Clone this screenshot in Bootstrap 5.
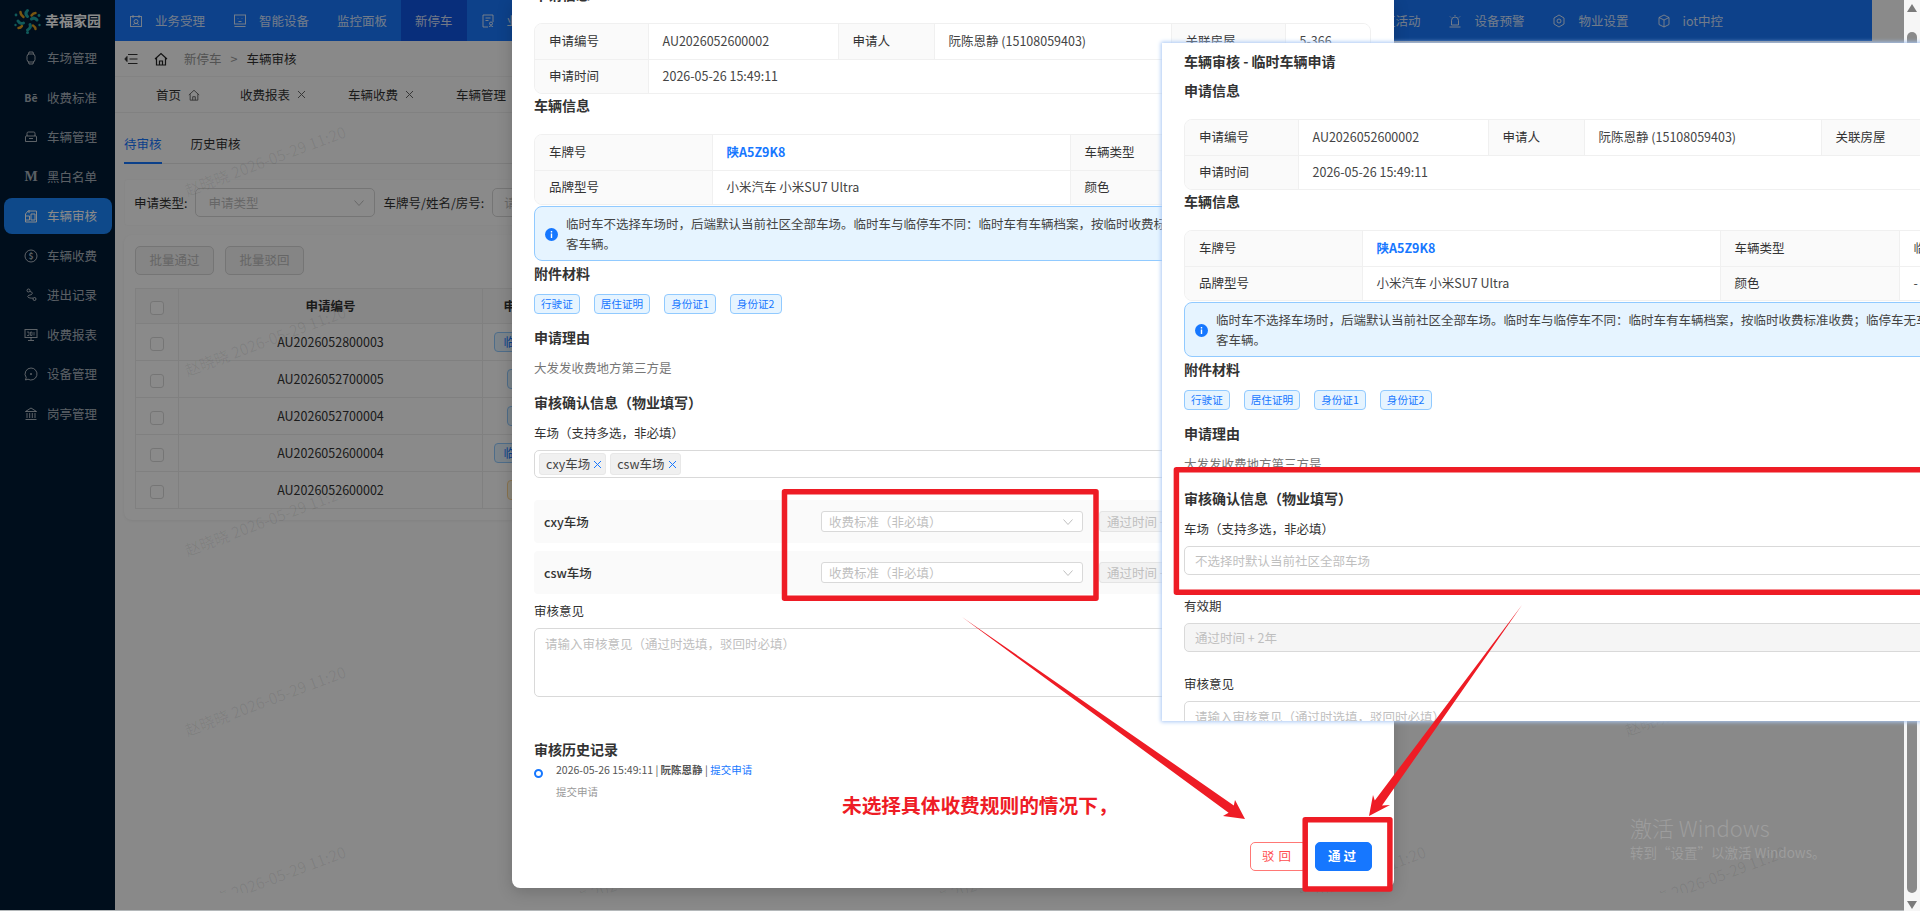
<!DOCTYPE html>
<html lang="zh-CN">
<head>
    <meta charset="UTF-8">
    <meta name="viewport" content="width=device-width, initial-scale=1.0">
    <title>车辆审核</title>
    <link href="https://cdn.jsdelivr.net/npm/bootstrap@5.3.3/dist/css/bootstrap.min.css" rel="stylesheet">
    <style>
        html, body { height: 100%; overflow: hidden; }
        body { font-family: "Noto Sans CJK SC", "Liberation Sans", sans-serif; font-size: 12.5px; line-height: 20px; color: #333; background: #fff; }
        svg { display: block; flex: none; }

        .stage { position: relative; width: 1920px; height: 911px; overflow: hidden; background: #b4b8ba; }
        .page-shell { position: relative; width: 1904px; height: 910px; background: #fdfdfd; }
        .dim-mask { position: absolute; inset: 0; z-index: 5; background: rgba(0, 0, 0, .46); }
        .scroll-rail { width: 16px; height: 911px; background: #f6f6f6; }
        .rail-up { width: 0; height: 0; margin-top: 4px; border: 5px solid transparent; border-top: 0; border-bottom: 8px solid #7a7a7a; }
        .rail-down { width: 0; height: 0; margin: 8px 0 2px; border: 5px solid transparent; border-bottom: 0; border-top: 8px solid #7a7a7a; }
        .rail-thumb { width: 10px; margin-top: 20px; border-radius: 5px; background: #8a8a8a; }

        /* sidebar */
        .side-rail { width: 115px; background: #001a35; position: relative; z-index: 2; }
        .brand-row { height: 40px; padding-left: 14px; gap: 4px; color: #fff; font-size: 14px; font-weight: 700; }
        .side-menu { gap: 3.55px; }
        .side-menu .nav-link { height: 36px; margin: 0 3px 0 4px; padding: 0 0 0 20px; gap: 9px; border-radius: 8px; color: rgba(255, 255, 255, .68); font-size: 12.5px; }
        .side-menu .nav-link.active { background: #1a88ff; color: #fff; }
        .menu-ico { width: 14px; height: 14px; font-size: 10.5px; line-height: 14px; text-align: center; font-weight: 700; }
        .menu-ico-serif { font-family: "Liberation Serif", serif; font-size: 14px; }

        /* header */
        .top-strip { height: 41px; background: #1979ff; }
        .top-menu .nav-link { height: 41px; padding: 0 14px; gap: 12px; color: rgba(255, 255, 255, .82); font-size: 12.5px; }
        .top-menu .nav-link.active { background: #1056e4; }
        .top-gap { width: 135px; }
        .top-user { width: 32px; background: #fff; }
        .crumb-row { height: 36px; padding-left: 9px; border-bottom: 1px solid #f2f2f2; color: #333; }
        .crumb-muted { color: #999; }
        .crumb-sep { margin: 0 9px; color: #999; }
        .tag-row { height: 36px; padding-left: 41px; border-bottom: 1px solid #eee; }
        .tag-item { width: 108px; gap: 7px; color: #333; }
        .tag-home { width: 84px; }

        .content-wrap { padding: 9px 9px 0; }
        .audit-tabs { height: 42px; border-bottom: 1px solid #e8e8e8; gap: 29px; }
        .audit-tabs .nav-link { height: 42px; padding: 12px 0 0; line-height: 20px; color: #333; font-size: 12.5px; }
        .audit-tabs .nav-link.active { color: #1677ff; border-bottom: 2px solid #1677ff; }
        .filter-box { height: 47px; margin-top: 15px; padding-left: 10px; background: #fff; border-radius: 4px; gap: 8px; box-shadow: inset 0 0 0 1px #fafafa; }
        .fake-select { display: flex; align-items: center; justify-content: space-between; border: 1px solid #d9d9d9; border-radius: 5px; background: #fff; color: #bfbfbf; }
        .filter-select { width: 180px; height: 29px; padding: 0 10px 0 12px; }
        .filter-input { width: 180px; height: 29px; padding-left: 11px; }
        .data-box { height: 285px; margin-top: 9px; padding: 11px; background: #fff; border-radius: 8px; box-shadow: 0 1px 3px rgba(0, 0, 0, .06); }
        .btn-mute { width: 79px; height: 29px; padding: 0; margin-right: 11px; font-size: 12.5px; color: #bdbdbd; background: #f5f5f5; border: 1px solid #d9d9d9; border-radius: 5px; }
        .audit-table { width: 800px; margin: 13px 0 0; table-layout: fixed; }
        .audit-table th, .audit-table td { height: 37px; padding: 0; text-align: center; vertical-align: middle; border: 1px solid #ececec; font-size: 12.5px; color: #333; background: transparent; }
        .audit-table th { height: 35px; font-weight: 600; background: #fafafa; }
        .cw-check { width: 43px; }
        .cw-no { width: 304px; }
        .cw-type { width: 92px; }
        .audit-table .form-check-input { width: 14px; height: 14px; margin: 0; float: none; vertical-align: middle; border-color: #d9d9d9; }
        .type-chip { display: inline-block; height: 20px; line-height: 18px; padding: 0 8px; border: 1px solid #91caff; border-radius: 4px; background: #e6f4ff; color: #1677ff; }
        .type-chip-warn { border-color: #ffd591; background: #fff7e6; color: #d46b08; }

        .watermark-layer { position: absolute; left: 85px; top: 70px; height: 823px; width: 1819px; overflow: hidden; z-index: 3; display: grid; grid-template-columns: repeat(5, 360px); grid-auto-rows: 180px; pointer-events: none; }
        .watermark-layer span { display: flex; align-items: center; justify-content: center; transform: rotate(-20.5deg); font-size: 15.4px; white-space: nowrap; color: rgba(0, 0, 0, .075); }

        /* modal and the pasted copy of it */
        .review-modal { position: absolute; left: 512px; top: 0; width: 882px; height: 888px; z-index: 6; padding: 0 22px 17px; background: #fff; border-radius: 0 0 8px 8px; box-shadow: 0 4px 16px rgba(0, 0, 0, .18); }
        .review-copy { position: absolute; left: 1162px; top: 43px; width: 882px; height: 678px; z-index: 7; padding: 8px 22px 0; overflow: hidden; background: #fff; box-shadow: 0 0 4px 1px #a9c8f5; }
        .copy-title { margin-bottom: 9px; font-size: 14px; font-weight: 600; line-height: 20px; }
        .sec-title { font-size: 14px; font-weight: 600; line-height: 20px; margin-bottom: 11px; color: #333; }
        .sec-title-wide { margin-bottom: 19px; }
        .sec-title-tight { margin-bottom: 5px; }
        .sec-top { margin-top: -16px; }
        .mt-1px { margin-top: 1px; }
        .mt-2px { margin-top: 2px; }
        .mt-13 { margin-top: 13px; }
        .mt-14 { margin-top: 14px; }
        .mt-21 { margin-top: 21px; }
        .mt-22 { margin-top: 22px; }
        .mt-42 { margin-top: 42px; }
        .field-label { line-height: 20px; margin-bottom: 7px; color: #333; }
        .mt-7 { margin-top: 7px; }

        .info-wrap { width: 837px; border: 1px solid #f0f0f0; border-radius: 8px; overflow: hidden; }
        .info-grid { width: 835px; margin: 0; table-layout: fixed; }
        .info-grid th, .info-grid td { height: 35px; padding: 0 14px; vertical-align: middle; font-size: 12.5px; font-weight: 400; color: #444; border: solid #f0f0f0; border-width: 0 1px 1px 0; background: #fff; }
        .info-grid tr:last-child th, .info-grid tr:last-child td { height: 34px; border-bottom: 0; }
        .info-grid th { background: #fafafa; color: #333; }
        .plate-link { color: #1677ff; font-weight: 700; }
        .w113 { width: 113px; } .w190 { width: 190px; } .w96 { width: 96px; } .w237 { width: 237px; } .w114 { width: 114px; } .w85 { width: 85px; }
        .w177 { width: 177px; } .w358 { width: 358px; } .w179 { width: 179px; } .w121 { width: 121px; }

        .tip-box { width: 837px; height: 55px; margin: 1px 0 0; padding: 7px 0 0 10px; gap: 8px; background: #e6f4ff; border: 1px solid #91caff; border-radius: 8px; color: #444; white-space: nowrap; overflow: hidden; }
        .tip-ico { width: 13px; height: 13px; margin-top: 14px; }
        .file-list { gap: 14px; height: 20px; }
        .file-chip { height: 20px; padding: 0 6px; line-height: 18px; font-size: 10.6px; color: #1677ff; background: #e6f4ff; border: 1px solid #91caff; border-radius: 4px; }
        .reason-text { color: #777; line-height: 20px; }

        .multi-box { width: 837px; height: 28px; padding: 2px 4px; gap: 4px; border: 1px solid #d9d9d9; border-radius: 5px; background: #fff; }
        .lot-chip { height: 22px; padding: 0 3px 0 6px; gap: 3px; background: #f0f0f0; border: 1px solid #e8e8e8; border-radius: 3px; color: #444; }
        .plain-input { width: 837px; height: 29px; padding: 0 10px; line-height: 27px; border: 1px solid #d9d9d9; border-radius: 5px; background: #fff; color: #bfbfbf; }
        .plain-input.is-off { background: #f5f5f5; }
        .opinion-box { width: 837px; height: 69px; padding: 5px 10px; line-height: 20px; border: 1px solid #d9d9d9; border-radius: 5px; color: #bfbfbf; background: #fff; }
        .park-row { width: 837px; height: 43px; padding: 0 10px; gap: 16px; background: #fafafa; border-radius: 4px; font-weight: 500; color: #333; }
        .park-row + .park-row { margin-top: 8px; }
        .rule-select { width: 262px; height: 21px; padding: 0 9px 0 7px; border-radius: 3px; font-weight: 400; }
        .rule-off { width: 262px; height: 21px; padding: 0 7px; line-height: 19px; border: 1px solid #e4e4e4; border-radius: 3px; background: #f2f2f2; color: #bfbfbf; font-weight: 400; white-space: nowrap; }

        .trail-row { gap: 13px; font-size: 10.5px; line-height: 12px; color: #555; }
        .trail-dot { width: 9px; height: 9px; margin: 5px 0 0 0; border: 2px solid #1677ff; border-radius: 50%; background: #fff; }
        .trail-note { margin-top: 10px; color: #999; }
        .trail-link { color: #1677ff; }
        .footer-row { margin-top: auto; gap: 8px; }
        .btn-reject, .btn-pass { width: 57px; height: 29px; padding: 0; font-size: 12.5px; border-radius: 5px; letter-spacing: 4px; }
        .btn-reject { color: #ff4d4f; background: #fff; border: 1px solid #ff7875; }
        .btn-pass { color: #fff; background: #1677ff; border: 1px solid #1677ff; font-weight: 600; letter-spacing: 3px; }

        /* annotations on top of the screenshot */
        .note-layer { position: absolute; left: 0; top: 0; z-index: 8; pointer-events: none; }
        .note-text { position: absolute; left: 842px; top: 790px; z-index: 9; font-size: 19.7px; line-height: 30px; font-weight: 700; color: #ee1c25; white-space: nowrap; }
        .win-mark { position: absolute; left: 1630px; top: 813px; z-index: 6; color: #9d9d9d; white-space: nowrap; }
        .win-title { font-size: 22px; line-height: 28px; font-weight: 300; }
        .win-sub { font-size: 13.5px; line-height: 20px; margin-top: 1px; }
    </style>
</head>
<body>
<div class="stage d-flex">
    <div class="page-shell d-flex">
        <aside class="side-rail flex-shrink-0">
            <div class="brand-row d-flex align-items-center">
                <svg width="27" height="27" viewBox="0 0 27 27" fill="none" stroke-linecap="round">
                    <g stroke="#1fa6a6" stroke-width="3">
                        <path d="M13.5 9.5C11.5 7.500 11.5 5.500 13.5 3.500"/><path d="M17.5 12C19.500 10.500 21.500 11 23 13"/><path d="M16 17.500C17 19.500 16 21.500 13.500 23"/><path d="M9.500 16C7.500 17 5.500 16.500 4 14"/>
                    </g>
                    <g stroke="#e0a21f" stroke-width="2.400">
                        <path d="M9.500 10C7.500 8.500 6.500 7 6.500 5"/><path d="M17.500 8.500C18.500 7 20 6 21.500 6"/><path d="M19 18.500C20.500 19.500 21.500 20.500 21.500 22"/><path d="M8 19C7 20.500 6 21 4.500 21"/>
                    </g>
                    <g fill="#1fa6a6"><circle cx="13.500" cy="25.500" r="1.500"/><circle cx="2" cy="8" r="1.400"/><circle cx="25" cy="8.500" r="1.400"/><circle cx="1.500" cy="18" r="1.200"/><circle cx="25.500" cy="18" r="1.200"/></g>
                </svg>
                <span>幸福家园</span>
            </div>
            <nav class="nav flex-column side-menu">
                <a class="nav-link d-flex align-items-center" href="#"><svg class="menu-ico" viewBox="0 0 14 14" fill="none" stroke="currentColor"><rect x="3" y="3" width="8" height="8" rx="2.500"/><path d="M4.500 3l.5-2h4l.5 2M4.500 11l.5 2h4l.5-2"/></svg>车场管理</a>
                <a class="nav-link d-flex align-items-center" href="#"><span class="menu-ico">Bē</span>收费标准</a>
                <a class="nav-link d-flex align-items-center" href="#"><svg class="menu-ico" viewBox="0 0 14 14" fill="none" stroke="currentColor"><path d="M3 6V3.500C3 2.500 3.500 2 4.500 2h5C10.500 2 11 2.500 11 3.500V6M1.500 7v4.500h11V7C12.500 6 12 6 11 6H3C2 6 1.500 6 1.500 7zM5 8.500h4"/></svg>车辆管理</a>
                <a class="nav-link d-flex align-items-center" href="#"><span class="menu-ico menu-ico-serif">M</span>黑白名单</a>
                <a class="nav-link active d-flex align-items-center" href="#"><svg class="menu-ico" viewBox="0 0 14 14" fill="none" stroke="currentColor"><path d="M1.500 13V5L4 2h8.500v11zM5 1v3M1.500 7h4v4h-4M7 5h4v6H7z"/></svg>车辆审核</a>
                <a class="nav-link d-flex align-items-center" href="#"><svg class="menu-ico" viewBox="0 0 14 14" fill="none" stroke="currentColor"><circle cx="7" cy="7" r="6"/><text x="7" y="10" text-anchor="middle" font-size="8.500" fill="currentColor" stroke="none">$</text></svg>车辆收费</a>
                <a class="nav-link d-flex align-items-center" href="#"><svg class="menu-ico" viewBox="0 0 14 14" fill="none" stroke="currentColor"><circle cx="4.500" cy="2.500" r="1.500"/><path d="M6 3.500C9 4 9 6.500 6 7 3 7.500 3 9.500 6 10c2 .3 3 0 3 0"/><circle cx="10.500" cy="11" r="1.500"/></svg>进出记录</a>
                <a class="nav-link d-flex align-items-center" href="#"><svg class="menu-ico" viewBox="0 0 14 14" fill="none" stroke="currentColor"><rect x="1" y="1.500" width="12" height="8"/><path d="M7 9.500V12M4 12.500h6"/><path d="M3 4h2v3.500H3M6.500 4h1.500v3.500H6.500zM10 4v3.500" stroke-width=".8"/></svg>收费报表</a>
                <a class="nav-link d-flex align-items-center" href="#"><svg class="menu-ico" viewBox="0 0 14 14" fill="none" stroke="currentColor"><path d="M7 1a6 6 0 1 1-3 11.200L1.500 13l.7-2.500A6 6 0 0 1 7 1z"/><circle cx="7" cy="7" r=".5" fill="currentColor"/></svg>设备管理</a>
                <a class="nav-link d-flex align-items-center" href="#"><svg class="menu-ico" viewBox="0 0 14 14" fill="none" stroke="currentColor"><path d="M7 1l5.500 3.500h-11zM3 6v5M5.700 6v5M8.300 6v5M11 6v5M1.500 12.500h11"/></svg>岗亭管理</a>
            </nav>
        </aside>

        <div class="flex-grow-1 d-flex flex-column">
            <header class="top-strip d-flex">
                <nav class="nav top-menu flex-nowrap">
                    <a class="nav-link d-flex align-items-center" href="#"><svg width="14" height="14" viewBox="0 0 14 14" fill="none" stroke="currentColor"><rect x="1.500" y="2.500" width="11" height="10"/><path d="M4 1v3M10 1v3M5 7.500a2 2 0 1 1 4 0 2 2 0 0 1-4 0zM4 11c1-2 5-2 6 0"/></svg>业务受理</a>
                    <a class="nav-link d-flex align-items-center" href="#"><svg width="14" height="14" viewBox="0 0 14 14" fill="none" stroke="currentColor"><rect x="1.500" y="1" width="11" height="9"/><path d="M1.500 12.500h11M5 4.500v.5M9 4.500v.5M5.500 7.500h3"/></svg>智能设备</a>
                    <a class="nav-link d-flex align-items-center" href="#">监控面板</a>
                    <a class="nav-link active d-flex align-items-center" href="#">新停车</a>
                    <a class="nav-link d-flex align-items-center" href="#"><svg width="14" height="14" viewBox="0 0 14 14" fill="none" stroke="currentColor"><path d="M12 8V1H2v12h5M4.500 4h5M4.500 6.500h3"/><circle cx="10" cy="9.500" r="1.500"/><path d="M8 13c.5-1.500 3.500-1.500 4 0"/></svg>业主服务</a>
                </nav>
                <nav class="nav top-menu flex-nowrap ms-auto">
                    <a class="nav-link d-flex align-items-center" href="#">社区活动</a>
                    <a class="nav-link d-flex align-items-center" href="#"><svg width="14" height="14" viewBox="0 0 14 14" fill="none" stroke="currentColor"><path d="M3.500 11V6.500a3.500 3.500 0 0 1 7 0V11zM1.500 13h11M2 2.500l1 1M12 2.500l-1 1M7 1v1"/></svg>设备预警</a>
                    <a class="nav-link d-flex align-items-center" href="#"><svg width="14" height="14" viewBox="0 0 14 14" fill="none" stroke="currentColor"><path d="M7 1l5 3v6l-5 3-5-3V4z"/><circle cx="7" cy="7" r="2"/></svg>物业设置</a>
                    <a class="nav-link d-flex align-items-center" href="#"><svg width="14" height="14" viewBox="0 0 14 14" fill="none" stroke="currentColor"><path d="M7 1l5 2.500v7L7 13l-5-2.500v-7zM2 3.500l5 2.500 5-2.500M7 6v7"/></svg>iot中控</a>
                </nav>
                <div class="top-gap"></div>
                <div class="top-user"></div>
            </header>

            <div class="crumb-row d-flex align-items-center">
                <svg width="14" height="12" viewBox="0 0 14 12" fill="none" stroke="#333"><path d="M4 1.500h9.500M5.500 6H13.500M4 10.500h9.500"/><path d="M3 3.500L.8 6 3 8.500z" fill="#333"/></svg>
                <svg class="mx-3" width="14" height="14" viewBox="0 0 14 14" fill="none" stroke="#222" stroke-width="1.200"><path d="M1 7l6-5.500L13 7M2.500 6v7h9V6M5.500 13V9h3v4"/></svg>
                <span class="crumb-muted">新停车</span><span class="crumb-sep">&gt;</span><span>车辆审核</span>
            </div>
            <div class="tag-row d-flex align-items-center">
                <span class="tag-item tag-home d-flex align-items-center">首页<svg width="12" height="12" viewBox="0 0 14 14" fill="none" stroke="#555"><path d="M1 7l6-5.500L13 7M2.500 6v7h9V6M5.500 13V9h3v4"/></svg></span>
                <span class="tag-item d-flex align-items-center">收费报表<svg width="9" height="9" viewBox="0 0 9 9" stroke="#666"><path d="M1 1l7 7M8 1L1 8"/></svg></span>
                <span class="tag-item d-flex align-items-center">车辆收费<svg width="9" height="9" viewBox="0 0 9 9" stroke="#666"><path d="M1 1l7 7M8 1L1 8"/></svg></span>
                <span class="tag-item d-flex align-items-center">车辆管理<svg width="9" height="9" viewBox="0 0 9 9" stroke="#666"><path d="M1 1l7 7M8 1L1 8"/></svg></span>
            </div>

            <main class="content-wrap flex-grow-1">
                <ul class="nav audit-tabs">
                    <li class="nav-item"><a class="nav-link active" href="#">待审核</a></li>
                    <li class="nav-item"><a class="nav-link" href="#">历史审核</a></li>
                </ul>
                <div class="filter-box d-flex align-items-center">
                    <span>申请类型:</span>
                    <div class="fake-select filter-select"><span>申请类型</span><svg width="10" height="6" viewBox="0 0 10 6" fill="none" stroke="#bfbfbf"><path d="M.5.5L5 5.500 9.500.5"/></svg></div>
                    <span>车牌号/姓名/房号:</span>
                    <div class="fake-select filter-input"><span>请输入</span></div>
                </div>
                <div class="data-box">
                    <button type="button" class="btn btn-mute">批量通过</button><button type="button" class="btn btn-mute">批量驳回</button>
                    <table class="table audit-table">
                        <colgroup><col class="cw-check"><col class="cw-no"><col class="cw-type"><col></colgroup>
                        <thead>
                            <tr><th><input class="form-check-input" type="checkbox"></th><th>申请编号</th><th>申请类型</th><th>车牌号</th></tr>
                        </thead>
                        <tbody>
                            <tr><td><input class="form-check-input" type="checkbox"></td><td>AU2026052800003</td><td><span class="type-chip">临时车辆</span></td><td></td></tr>
                            <tr><td><input class="form-check-input" type="checkbox"></td><td>AU2026052700005</td><td><span class="type-chip">新增</span></td><td></td></tr>
                            <tr><td><input class="form-check-input" type="checkbox"></td><td>AU2026052700004</td><td><span class="type-chip">新增</span></td><td></td></tr>
                            <tr><td><input class="form-check-input" type="checkbox"></td><td>AU2026052600004</td><td><span class="type-chip">临时车辆</span></td><td></td></tr>
                            <tr><td><input class="form-check-input" type="checkbox"></td><td>AU2026052600002</td><td><span class="type-chip type-chip-warn">临时</span></td><td></td></tr>
                        </tbody>
                    </table>
                </div>
            </main>
        </div>

        <div class="watermark-layer" id="wm-layer"></div>
        <div class="dim-mask"></div>
    </div>

    <div class="scroll-rail d-flex flex-column align-items-center">
        <div class="rail-up"></div>
        <div class="rail-thumb flex-grow-1"></div>
        <div class="rail-down"></div>
    </div>

    <!-- dialog under the annotations -->
    <section class="review-modal d-flex flex-column">
        <div class="sec-title sec-title-wide sec-top">申请信息</div>
        <div class="info-wrap">
            <table class="table info-grid">
                <colgroup><col class="w113"><col class="w190"><col class="w96"><col class="w237"><col class="w114"><col class="w85"></colgroup>
                <tr><th>申请编号</th><td>AU2026052600002</td><th>申请人</th><td>阮陈恩静 (15108059403)</td><th>关联房屋</th><td>5-366</td></tr>
                <tr><th>申请时间</th><td colspan="5">2026-05-26 15:49:11</td></tr>
            </table>
        </div>
        <div class="sec-title sec-title-wide mt-1px">车辆信息</div>
        <div class="info-wrap">
            <table class="table info-grid">
                <colgroup><col class="w177"><col class="w358"><col class="w179"><col class="w121"></colgroup>
                <tr><th>车牌号</th><td><span class="plate-link">陕A5Z9K8</span></td><th>车辆类型</th><td>临时车辆</td></tr>
                <tr><th>品牌型号</th><td>小米汽车 小米SU7 Ultra</td><th>颜色</th><td>-</td></tr>
            </table>
        </div>
        <div class="alert tip-box d-flex">
            <svg class="tip-ico" viewBox="0 0 13 13"><circle cx="6.500" cy="6.500" r="6.500" fill="#1677ff"/><rect x="5.800" y="5.500" width="1.400" height="4.500" fill="#fff"/><rect x="5.800" y="3" width="1.400" height="1.500" fill="#fff"/></svg>
            <div>临时车不选择车场时，后端默认当前社区全部车场。临时车与临停车不同：临时车有车辆档案，按临时收费标准收费；临停车无车辆档案，为访<br>客车辆。</div>
        </div>
        <div class="sec-title mt-2px">附件材料</div>
        <div class="file-list d-flex">
            <span class="file-chip">行驶证</span><span class="file-chip">居住证明</span><span class="file-chip">身份证1</span><span class="file-chip">身份证2</span>
        </div>
        <div class="sec-title mt-13">申请理由</div>
        <div class="reason-text">大发发收费地方第三方是</div>
        <div class="sec-title mt-14">审核确认信息（物业填写）</div>
        <div class="field-label">车场（支持多选，非必填）</div>
        <div class="multi-box d-flex align-items-center">
            <span class="lot-chip d-flex align-items-center">cxy车场<svg width="9" height="9" viewBox="0 0 9 9" stroke="#1677ff"><path d="M1 1l7 7M8 1L1 8"/></svg></span>
            <span class="lot-chip d-flex align-items-center">csw车场<svg width="9" height="9" viewBox="0 0 9 9" stroke="#1677ff"><path d="M1 1l7 7M8 1L1 8"/></svg></span>
        </div>
        <div class="park-row d-flex align-items-center mt-22">
            <span class="me-auto">cxy车场</span>
            <div class="fake-select rule-select"><span>收费标准（非必填）</span><svg width="10" height="6" viewBox="0 0 10 6" fill="none" stroke="#bfbfbf"><path d="M.5.5L5 5.500 9.500.5"/></svg></div>
            <div class="rule-off">通过时间 + 2年</div>
        </div>
        <div class="park-row d-flex align-items-center">
            <span class="me-auto">csw车场</span>
            <div class="fake-select rule-select"><span>收费标准（非必填）</span><svg width="10" height="6" viewBox="0 0 10 6" fill="none" stroke="#bfbfbf"><path d="M.5.5L5 5.500 9.500.5"/></svg></div>
            <div class="rule-off">通过时间 + 2年</div>
        </div>
        <div class="field-label mt-7">审核意见</div>
        <div class="opinion-box">请输入审核意见（通过时选填，驳回时必填）</div>
        <div class="sec-title sec-title-tight mt-42">审核历史记录</div>
        <div class="trail-row d-flex">
            <div class="trail-dot flex-shrink-0"></div>
            <div>
                <div>2026-05-26 15:49:11 | <b>阮陈恩静</b> | <span class="trail-link">提交申请</span></div>
                <div class="trail-note">提交申请</div>
            </div>
        </div>
        <div class="footer-row d-flex justify-content-end">
            <button type="button" class="btn btn-reject">驳回</button>
            <button type="button" class="btn btn-pass">通过</button>
        </div>
    </section>

    <!-- pasted copy, earlier version of the dialog -->
    <section class="review-copy">
        <div class="copy-title">车辆审核 - 临时车辆申请</div>
        <div class="sec-title sec-title-wide">申请信息</div>
        <div class="info-wrap">
            <table class="table info-grid">
                <colgroup><col class="w113"><col class="w190"><col class="w96"><col class="w237"><col class="w114"><col class="w85"></colgroup>
                <tr><th>申请编号</th><td>AU2026052600002</td><th>申请人</th><td>阮陈恩静 (15108059403)</td><th>关联房屋</th><td>5-366</td></tr>
                <tr><th>申请时间</th><td colspan="5">2026-05-26 15:49:11</td></tr>
            </table>
        </div>
        <div class="sec-title sec-title-wide mt-1px">车辆信息</div>
        <div class="info-wrap">
            <table class="table info-grid">
                <colgroup><col class="w177"><col class="w358"><col class="w179"><col class="w121"></colgroup>
                <tr><th>车牌号</th><td><span class="plate-link">陕A5Z9K8</span></td><th>车辆类型</th><td>临时车辆</td></tr>
                <tr><th>品牌型号</th><td>小米汽车 小米SU7 Ultra</td><th>颜色</th><td>-</td></tr>
            </table>
        </div>
        <div class="alert tip-box d-flex">
            <svg class="tip-ico" viewBox="0 0 13 13"><circle cx="6.500" cy="6.500" r="6.500" fill="#1677ff"/><rect x="5.800" y="5.500" width="1.400" height="4.500" fill="#fff"/><rect x="5.800" y="3" width="1.400" height="1.500" fill="#fff"/></svg>
            <div>临时车不选择车场时，后端默认当前社区全部车场。临时车与临停车不同：临时车有车辆档案，按临时收费标准收费；临停车无车辆档案，为访<br>客车辆。</div>
        </div>
        <div class="sec-title mt-2px">附件材料</div>
        <div class="file-list d-flex">
            <span class="file-chip">行驶证</span><span class="file-chip">居住证明</span><span class="file-chip">身份证1</span><span class="file-chip">身份证2</span>
        </div>
        <div class="sec-title mt-13">申请理由</div>
        <div class="reason-text">大发发收费地方第三方是</div>
        <div class="sec-title mt-14">审核确认信息（物业填写）</div>
        <div class="field-label">车场（支持多选，非必填）</div>
        <div class="plain-input">不选择时默认当前社区全部车场</div>
        <div class="field-label mt-21">有效期</div>
        <div class="plain-input is-off">通过时间 + 2年</div>
        <div class="field-label mt-22">审核意见</div>
        <div class="opinion-box">请输入审核意见（通过时选填，驳回时必填）</div>
    </section>

    <div class="win-mark">
        <div class="win-title">激活 Windows</div>
        <div class="win-sub">转到“设置”以激活 Windows。</div>
    </div>

    <svg class="note-layer" width="1920" height="911" viewBox="0 0 1920 911">
        <g fill="none" stroke="#ee1c25" stroke-width="5.500" stroke-linejoin="round">
            <rect x="784.500" y="491.700" width="311.500" height="106.500"/>
            <rect x="1176.400" y="469.800" width="800" height="122.400"/>
            <rect x="1305.200" y="819.700" width="84.700" height="69.200"/>
        </g>
        <g fill="#ee1c25">
            <polygon points="962,617 1233.800,805.400 1235,800 1245,819 1223,816 1228.600,812.800"/>
            <polygon points="1522,605 1382,805.600 1390,805 1369,816 1373,795 1374.800,800.400"/>
        </g>
    </svg>
    <div class="note-text">未选择具体收费规则的情况下，</div>
</div>

<script>
    // same watermark repeated over the page, 5 across and 5 down
    const wmLayer = document.getElementById("wm-layer");
    for (let i = 0; i < 25; i++) {
        const item = document.createElement("span");
        item.textContent = "赵晓晓 2026-05-29 11:20";
        wmLayer.appendChild(item);
    }
</script>
<script src="https://cdn.jsdelivr.net/npm/bootstrap@5.3.3/dist/js/bootstrap.bundle.min.js"></script>
</body>
</html>
